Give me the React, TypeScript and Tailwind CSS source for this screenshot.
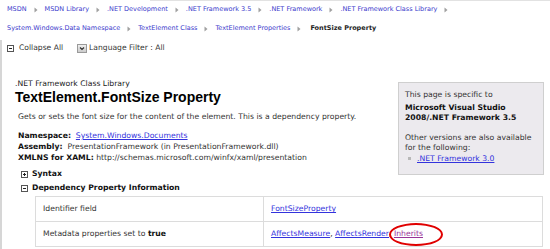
import { Fragment } from 'react';

const crumbs1 = ['MSDN', 'MSDN Library', '.NET Development', '.NET Framework 3.5', '.NET Framework', '.NET Framework Class Library'];
const crumbs2 = ['System.Windows.Data Namespace', 'TextElement Class', 'TextElement Properties'];

function Sep() {
  return (
    <svg width="4" height="6" viewBox="0 0 4 6" className="mx-[7px] shrink-0">
      <path d="M0.5 0.5 L3.5 3 L0.5 5.5 Z" fill="#a0a0a0" />
    </svg>
  );
}

function BoxIcon({ plus }: { plus?: boolean }) {
  return (
    <svg width="7" height="7" viewBox="0 0 7 7" className="shrink-0">
      <rect x="0.5" y="0.5" width="6" height="6" fill="#fff" stroke="#555" />
      <path d="M2 3.5 H5" stroke="#222" />
      {plus && <path d="M3.5 2 V5" stroke="#222" />}
    </svg>
  );
}

export default function App() {
  return (
    <div className="relative w-[550px] h-[249px] overflow-hidden bg-white font-['DejaVu_Sans',Verdana,sans-serif] text-[7.7px] text-[#333]">
      <div className="ml-[150px] h-px bg-[#e2e2e2]" />

      {/* breadcrumbs */}
      <div className="flex items-center h-[18px] pl-[7px] text-[#3a3acc] text-[6.5px]">
        {crumbs1.map((c) => (
          <Fragment key={c}>
            <span className="whitespace-nowrap">{c}</span>
            <Sep />
          </Fragment>
        ))}
      </div>
      <div className="flex items-center h-[19px] pl-[7px] text-[#3a3acc] text-[6.5px]">
        {crumbs2.map((c) => (
          <Fragment key={c}>
            <span className="whitespace-nowrap">{c}</span>
            <Sep />
          </Fragment>
        ))}
        <span className="ml-[2px] font-bold text-[#222] whitespace-nowrap">FontSize Property</span>
      </div>

      <div className="mt-[2px] border-l-2 border-[#d6d6d6] h-[211px]">
        {/* toolbar */}
        <div className="flex items-center h-[16px] pl-[5px] text-[7.6px] text-[#333]">
          <BoxIcon />
          <span className="ml-[5px]">Collapse All</span>
          <svg width="10" height="9" viewBox="0 0 10 9" className="ml-[14px] shrink-0">
            <defs>
              <linearGradient id="dd" x1="0" y1="0" x2="0" y2="1">
                <stop offset="0" stopColor="#f2f2f2" />
                <stop offset="1" stopColor="#c9c9c9" />
              </linearGradient>
            </defs>
            <rect x="0.5" y="0.5" width="9" height="8" fill="url(#dd)" stroke="#9a9a9a" />
            <path d="M3 3.5 L5 5.5 L7 3.5" fill="none" stroke="#333" strokeWidth="1.2" />
          </svg>
          <span className="ml-[2px]">Language Filter : All</span>
        </div>

        {/* main content */}
        <div className="mt-[23px] pl-[13px] pr-[6px]">
          <div className="float-right mt-[3px] w-[146px] h-[93px] border border-[#cfcfcf] bg-[#eceaee] pl-[6px] pt-[7px] leading-[10px] text-[#333]">
            <div>This page is specific to</div>
            <div className="mt-[2.7px] font-bold text-[#111]">
              Microsoft Visual Studio
              <br />
              2008/.NET Framework 3.5
            </div>
            <div className="mt-[10px]">
              Other versions are also available
              <br />
              for the following:
            </div>
            <div className="mt-[1.3px] flex items-center">
              <span className="ml-[3px] mr-[6px] w-[3px] h-[3px] bg-[#b8b8b8]" />
              <span className="text-[#3333dd] underline">.NET Framework 3.0</span>
            </div>
          </div>

          <div className="h-[10px] leading-[10px] text-[#222]">.NET Framework Class Library</div>
          <h1 className="h-[16px] leading-[16px] font-['Liberation_Sans',Arial,sans-serif] font-bold text-[14px] text-black">
            TextElement.FontSize Property
          </h1>
          <p className="mt-[7px] pl-[3px] leading-[10px]">
            Gets or sets the font size for the content of the element. This is a dependency property.
          </p>
          <div className="mt-[8px] pl-[3px] leading-[11px]">
            <div>
              <b className="text-[#111]">Namespace:</b>&nbsp; <span className="text-[#3333dd] underline">System.Windows.Documents</span>
            </div>
            <div>
              <b className="text-[#111]">Assembly:</b>&nbsp; PresentationFramework (in PresentationFramework.dll)
            </div>
            <div>
              <b className="text-[#111]">XMLNS for XAML:</b> http://schemas.microsoft.com/winfx/xaml/presentation
            </div>
          </div>

          <div className="mt-[5px] h-[12px] flex items-center pl-[6px] font-bold text-[#111]">
            <BoxIcon plus />
            <span className="ml-[4px]">Syntax</span>
          </div>
          <div className="mt-[2px] h-[12px] flex items-center pl-[6px] font-bold text-[#111]">
            <BoxIcon />
            <span className="ml-[4px]">Dependency Property Information</span>
          </div>

          <table className="clear-both mt-[2px] ml-[20px] w-[508px] border-collapse">
            <tbody>
              <tr>
                <td className="w-[228px] h-[25px] border border-[#dcdcdc] pl-[7px]">Identifier field</td>
                <td className="h-[25px] border border-[#dcdcdc] pl-[7px]">
                  <span className="text-[#3333dd] underline">FontSizeProperty</span>
                </td>
              </tr>
              <tr>
                <td className="h-[25px] border border-[#dcdcdc] pl-[7px]">
                  Metadata properties set to <b className="text-[#111]">true</b>
                </td>
                <td className="h-[25px] border border-[#dcdcdc] pl-[7px]">
                  <span className="text-[#3333dd] underline">AffectsMeasure</span>,{' '}
                  <span className="text-[#3333dd] underline">AffectsRender</span>,{' '}
                  <span className="text-[#993399] underline">Inherits</span>
                </td>
              </tr>
            </tbody>
          </table>
        </div>
      </div>

      {/* annotation */}
      <div className="absolute left-[389px] top-[223px] w-[54px] h-[23px] rounded-[50%] border-2 border-[#e00000]" />
    </div>
  );
}
